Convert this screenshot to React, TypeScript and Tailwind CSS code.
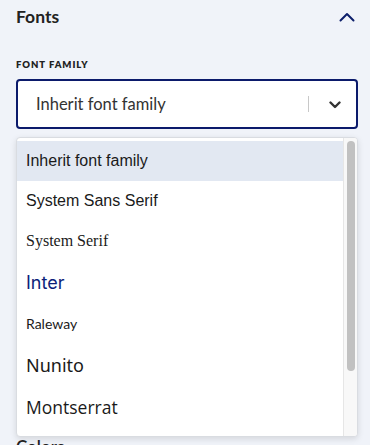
import { useState } from "react"

type FontOption = {
  label: string
  family: string
  size: string
  height: string
  color?: string
}

const options: FontOption[] = [
  { label: "Inherit font family", family: "font-['Liberation_Sans',Arial,sans-serif]", size: "text-[16px]", height: "h-[40px]" },
  { label: "System Sans Serif", family: "font-['Liberation_Sans',Arial,sans-serif]", size: "text-[16px]", height: "h-[40px]" },
  { label: "System Serif", family: "font-['Liberation_Serif','Times_New_Roman',serif]", size: "text-[16px]", height: "h-[40px]" },
  { label: "Inter", family: "font-['Inter',sans-serif]", size: "text-[18px]", height: "h-[42px]", color: "text-[#0d1f7a]" },
  { label: "Raleway", family: "font-['Lato',sans-serif]", size: "text-[14px]", height: "h-[40px]" },
  { label: "Nunito", family: "font-['Noto_Sans',sans-serif]", size: "text-[18px]", height: "h-[44px]" },
  { label: "Montserrat", family: "font-['Open_Sans',sans-serif]", size: "text-[17.5px]", height: "h-[41px]" },
]

function ChevronUp() {
  return (
    <svg width="16" height="10" viewBox="0 0 16 10" fill="none">
      <path d="M1.5 8.5L8 2l6.5 6.5" stroke="#0d1f6b" strokeWidth="2" strokeLinecap="round" strokeLinejoin="round" />
    </svg>
  )
}

function ChevronDown() {
  return (
    <svg width="12" height="8" viewBox="0 0 12 8" fill="none">
      <path d="M1.5 1.5L6 6l4.5-4.5" stroke="#333" strokeWidth="2.4" strokeLinecap="round" strokeLinejoin="round" />
    </svg>
  )
}

export default function App() {
  const [selected] = useState(0)

  return (
    <div className="w-[370px] h-[445px] overflow-hidden bg-[#f0f3f9] font-['Lato',sans-serif] text-[#222]">
      <div className="flex items-center justify-between pl-4 pr-[15px] h-[33px]">
        <h2 className="text-[17.5px] font-bold leading-none">Fonts</h2>
        <ChevronUp />
      </div>

      <div className="pl-4 pr-3 pt-[27px]">
        <div className="text-[9.5px] font-extrabold tracking-[0.1em] uppercase leading-[10px] text-[#222]">Font family</div>

        <div className="relative mt-[9px]">
          <div className="flex items-center h-[50px] rounded-[4px] border-2 border-[#0b1a6b] bg-white">
            <span className="flex-1 pl-[18px] text-[16.5px] text-[#333]">Inherit font family</span>
            <span className="w-px h-[16px] bg-[#c8c8c8]" />
            <span className="pl-[20px] pr-[15px] flex pt-[2px]">
              <ChevronDown />
            </span>
          </div>

          {/* content hidden under the open menu */}
          <div className="pt-[309px]">
            <h3 className="text-[17px] font-semibold leading-none">Colors</h3>
          </div>

          <div className="absolute left-0 right-0 top-[58px] h-[300px] rounded-[4px] border border-[#d9dce1] bg-white shadow-[0_2px_6px_rgba(0,0,0,0.12)] flex overflow-hidden">
            <ul className="flex-1 pt-[3px]">
              {options.map((o, i) => (
                <li
                  key={o.label}
                  className={`flex items-center pl-[9px] ${o.height} ${o.family} ${o.size} ${o.color ?? "text-[#1a1a1a]"} ${i === selected ? "bg-[#e2e8f2]" : ""}`}
                >
                  {o.label}
                </li>
              ))}
            </ul>
            <div className="w-[14px] border-l border-[#e6e6e6] bg-[#f8f8f8] pt-[3px] flex justify-center">
              <div className="w-[8px] h-[230px] rounded-full bg-[#c1c1c1]" />
            </div>
          </div>
        </div>
      </div>
    </div>
  )
}
